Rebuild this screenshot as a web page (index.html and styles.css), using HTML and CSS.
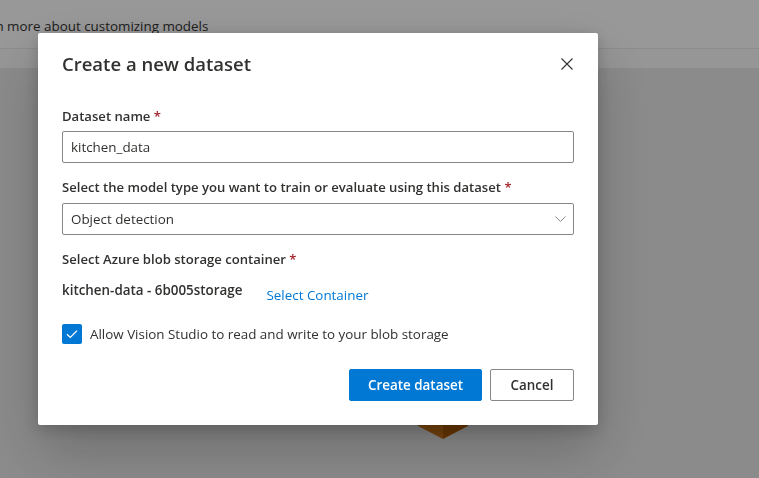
FILE: index.html
```html
<!DOCTYPE html>
<html lang="en">
<head>
<meta charset="utf-8">
<title>Create a new dataset</title>
<link rel="stylesheet" href="styles.css">
</head>
<body>
<div class="page">
  <header class="topbar"><span class="learn">Learn more about customizing models</span></header>
  <div class="band"></div>
  <main class="content">
    <svg class="cube" width="50" height="40" viewBox="0 0 50 40" aria-hidden="true">
      <polygon points="0,0 25,0 25,40 0,27" fill="#cc7418"/>
      <polygon points="25,0 50,0 50,27 25,40" fill="#b45e02"/>
    </svg>
  </main>
</div>

<div class="overlay">
  <div class="dialog" role="dialog" aria-labelledby="dlg-title">
    <div class="dialog-head">
      <h1 id="dlg-title" class="title">Create a new dataset</h1>
      <button class="close" aria-label="Close">
        <svg width="12" height="12" viewBox="0 0 12 12"><path d="M0.5 0.5 L11.5 11.5 M11.5 0.5 L0.5 11.5" stroke="#323130" stroke-width="1.1" fill="none"/></svg>
      </button>
    </div>

    <div class="field">
      <label class="label">Dataset name <span class="req">*</span></label>
      <div class="input">kitchen_data</div>
    </div>

    <div class="field">
      <label class="label">Select the model type you want to train or evaluate using this dataset <span class="req">*</span></label>
      <div class="input select">
        <span>Object detection</span>
        <svg width="11" height="6" viewBox="0 0 11 6"><path d="M0.5 0.5 L5.5 5.5 L10.5 0.5" stroke="#8a8886" stroke-width="1" fill="none"/></svg>
      </div>
    </div>

    <div class="field">
      <label class="label">Select Azure blob storage container <span class="req">*</span></label>
      <div class="container-row">
        <span class="container-name">kitchen-data - 6b005storage</span>
        <a class="link" href="#">Select Container</a>
      </div>
    </div>

    <div class="check-row">
      <span class="checkbox">
        <svg width="12" height="10" viewBox="0 0 12 10"><path d="M1 5.2 L4.3 8.4 L11 1.6" stroke="#fff" stroke-width="1.3" fill="none"/></svg>
      </span>
      <span class="check-label">Allow Vision Studio to read and write to your blob storage</span>
    </div>

    <div class="actions">
      <button class="btn primary">Create dataset</button>
      <button class="btn">Cancel</button>
    </div>
  </div>
</div>
</body>
</html>
```

FILE: styles.css
```css
* { box-sizing: border-box; }
html, body { margin: 0; padding: 0; height: 100%; }
body {
  font-family: "Open Sans", "Noto Sans", sans-serif;
  color: #323130;
  background: #e8e8e8;
  overflow: hidden;
}
.page { display: flex; flex-direction: column; height: 100%; }
.topbar {
  height: 49px;
  background: #fdfdfd;
  border-bottom: 1px solid #e9e9e9;
  display: flex;
  align-items: flex-end;
  padding-bottom: 13px;
  overflow: hidden;
}
.learn {
  font-size: 13.4px;
  color: #323130;
  margin-left: -32px;
  white-space: nowrap;
}
.band { height: 19px; background: #fafafa; }
.content {
  flex: 1;
  background: #e8e8e8;
  padding: 331px 0 0 418px;
}
.cube { display: block; }

.overlay {
  position: fixed;
  inset: 0;
  background: rgba(0, 0, 0, 0.4);
  padding: 33px 0 0 38px;
}
.dialog {
  width: 560px;
  background: #fff;
  border-radius: 2px;
  box-shadow: 0 25.6px 57.6px rgba(0,0,0,0.22), 0 4.8px 14.4px rgba(0,0,0,0.18);
  padding: 17px 24px 24px 24px;
}
.dialog-head {
  display: flex;
  align-items: center;
  justify-content: space-between;
  height: 28px;
  margin-bottom: 23px;
}
.title {
  margin: 0;
  font-size: 18.5px;
  font-weight: 600;
  line-height: 28px;
  color: #323130;
}
.close {
  border: 0;
  background: transparent;
  padding: 0;
  width: 12px;
  height: 12px;
  margin-right: 1px;
  display: flex;
}
.field { display: flex; flex-direction: column; margin-bottom: 9px; }
.label {
  font-size: 13.1px;
  font-weight: 600;
  line-height: 20px;
  padding: 5px 0;
  color: #323130;
}
.req { color: #a4262c; }
.input {
  height: 32px;
  border: 1px solid #8a8886;
  border-radius: 2px;
  padding: 0 8px;
  font-size: 13.4px;
  display: flex;
  align-items: center;
  color: #323130;
}
.select { justify-content: space-between; padding-right: 7px; margin-top: 1px; }
.container-row {
  display: flex;
  align-items: flex-start;
  gap: 24px;
  height: 35px;
  margin-top: 6px;
}
.container-name {
  font-size: 13.4px;
  font-weight: 600;
  line-height: 20px;
}
.link {
  font-size: 13.4px;
  line-height: 20px;
  color: #0078d4;
  text-decoration: none;
  margin-top: 5px;
}
.check-row {
  display: flex;
  align-items: center;
  gap: 8px;
  margin-top: 7px;
  height: 20px;
}
.checkbox {
  width: 20px;
  height: 20px;
  background: #0078d4;
  border-radius: 2px;
  display: flex;
  align-items: center;
  justify-content: center;
}
.check-label { font-size: 13.4px; line-height: 20px; }
.actions {
  display: flex;
  justify-content: flex-end;
  gap: 8px;
  margin-top: 25px;
}
.btn {
  font-family: inherit;
  height: 32px;
  border: 1px solid #8a8886;
  border-radius: 2px;
  background: #fff;
  color: #323130;
  font-size: 13.4px;
  font-weight: 600;
  padding: 0 12px;
  min-width: 84px;
  white-space: nowrap;
}
.btn.primary {
  background: #0078d4;
  border-color: #0078d4;
  color: #fff;
  width: 133px;
}
```
